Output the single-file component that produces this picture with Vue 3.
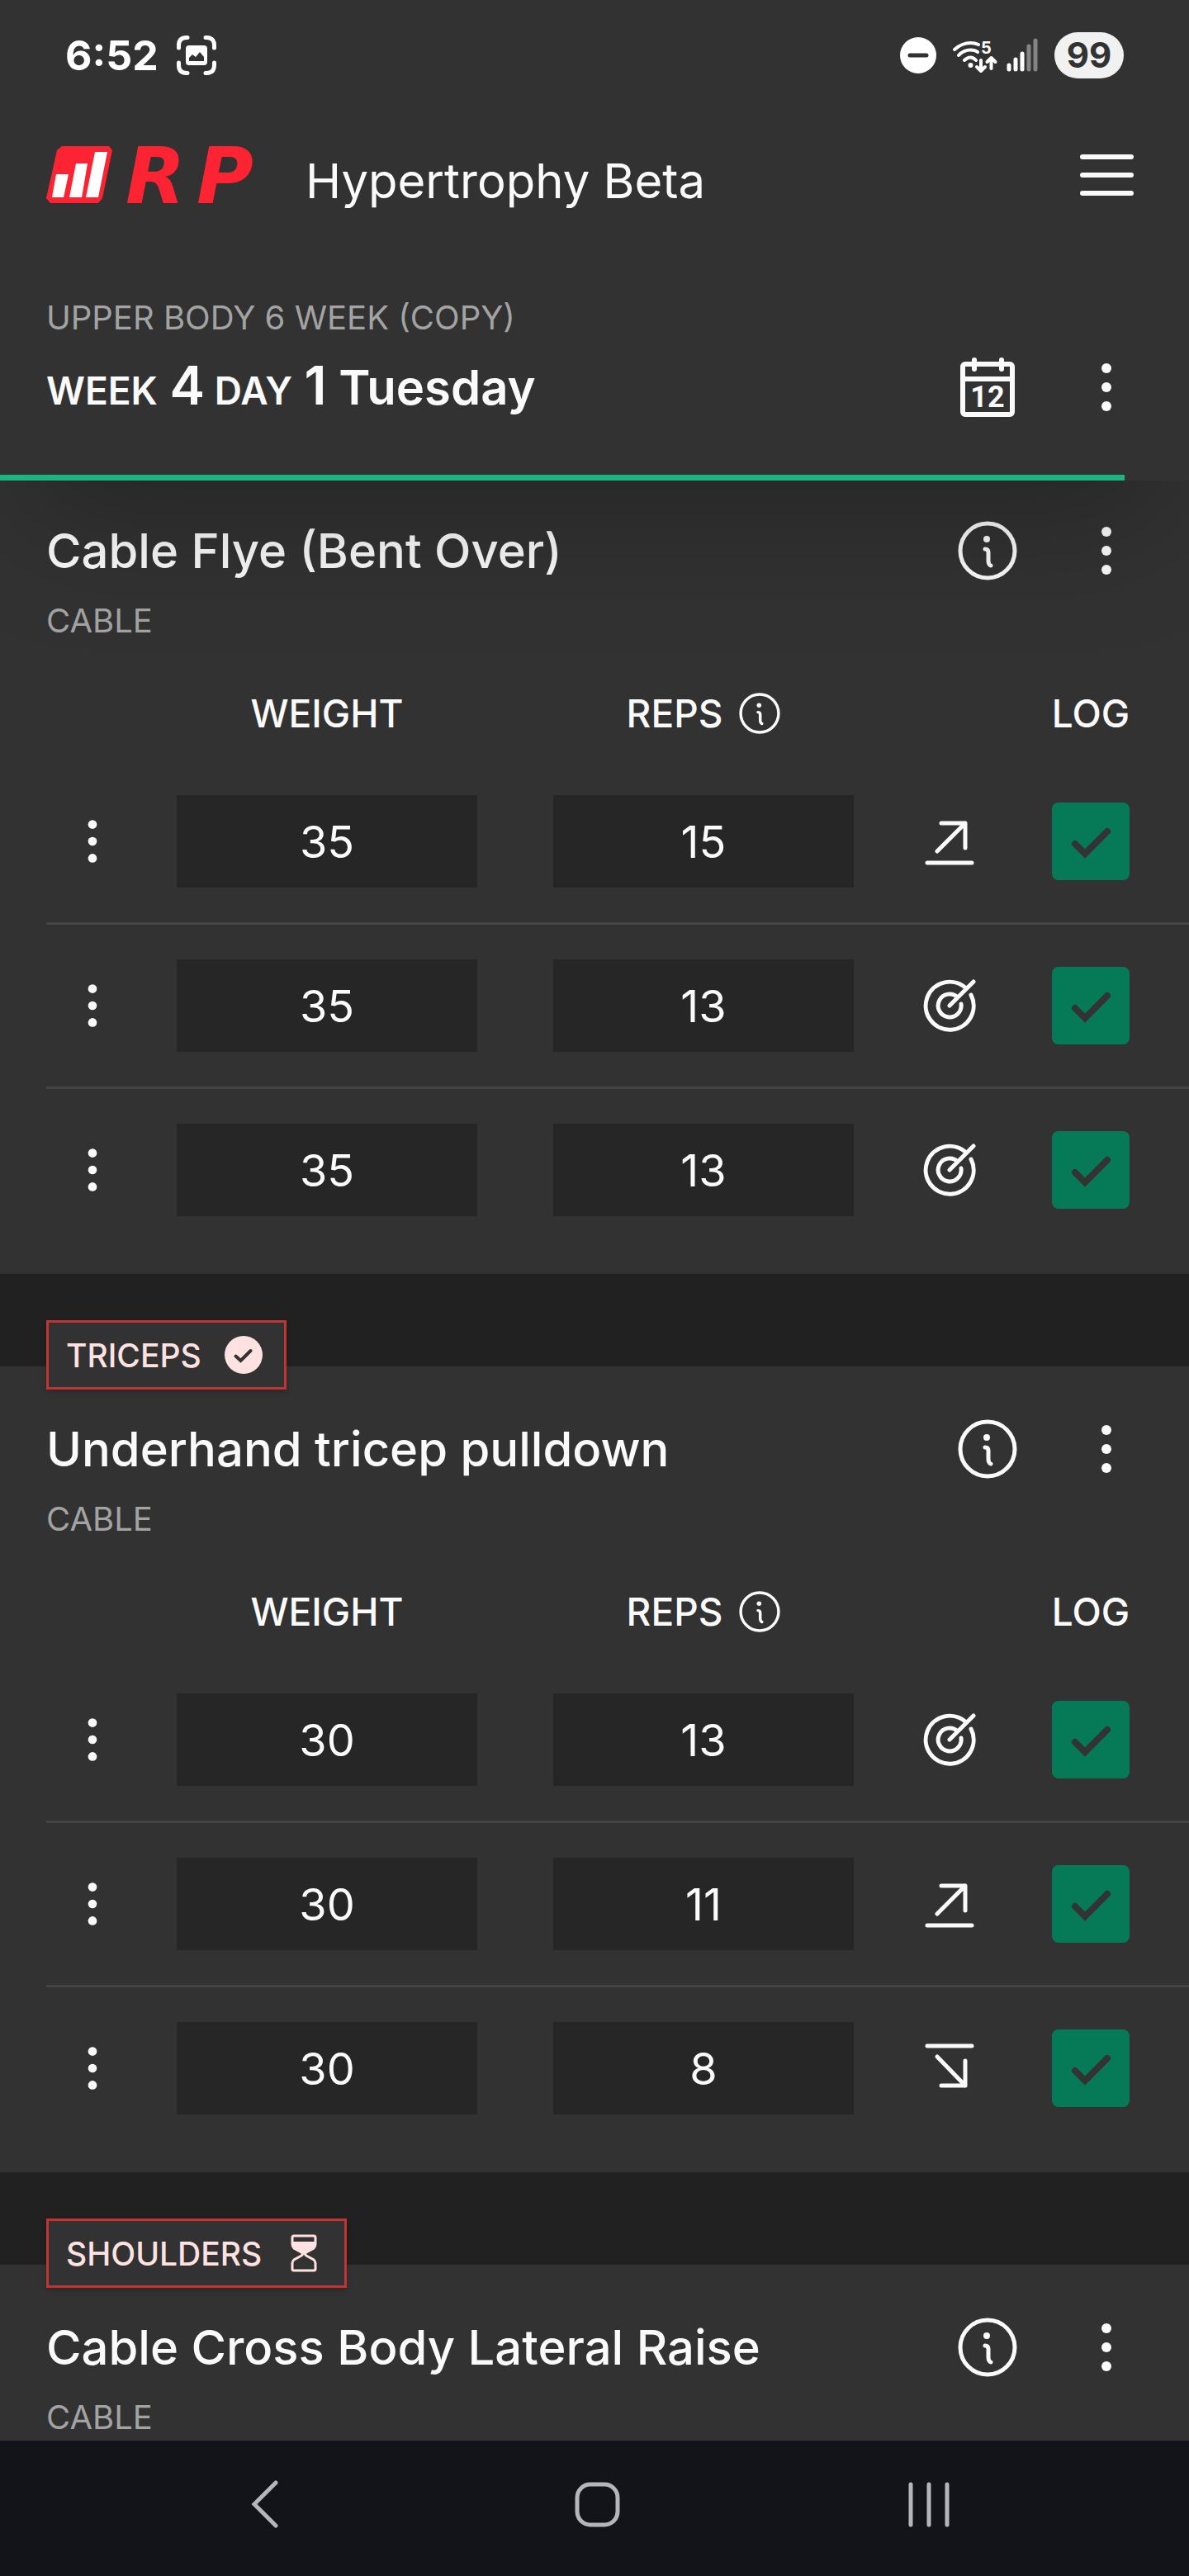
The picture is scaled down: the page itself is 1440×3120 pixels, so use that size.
<script setup>
import { ref } from 'vue';

const meso = { name: 'Upper Body 6 Week (Copy)', week: 4, day: 1, weekday: 'Tuesday', progress: 94.6 };

// trend: 'up' = beat the target, 'hit' = on target, 'down' = below it
const exercises = ref([
  {
    name: 'Cable Flye (Bent Over)',
    equipment: 'Cable',
    sets: [
      { weight: 35, reps: 15, trend: 'up', done: true },
      { weight: 35, reps: 13, trend: 'hit', done: true },
      { weight: 35, reps: 13, trend: 'hit', done: true }
    ]
  },
  {
    name: 'Underhand tricep pulldown',
    equipment: 'Cable',
    muscle: 'Triceps',
    status: 'done',
    sets: [
      { weight: 30, reps: 13, trend: 'hit', done: true },
      { weight: 30, reps: 11, trend: 'up', done: true },
      { weight: 30, reps: 8, trend: 'down', done: true }
    ]
  },
  {
    name: 'Cable Cross Body Lateral Raise',
    equipment: 'Cable',
    muscle: 'Shoulders',
    status: 'pending',
    sets: []
  }
]);

const trends = {
  up: 'M22 10H51V40M51 10L17 44M5 58H59',
  hit: 'M58 19A29 29 0 1 1 52.5 11.5M46 30A14 14 0 1 1 42 22M32 32L61 3',
  down: 'M5 5H59M17 18L51 53M22 53H51V23'
};
</script>

<template>
  <div class="screen">
    <div class="top">
      <div class="status-bar">
        <span class="time">6:52</span>
        <svg class="shot" viewBox="0 0 48 48">
          <path d="M2.500 15V12Q2.500 2.500 12 2.500H13M35 2.500H36Q45.500 2.500 45.500 12V15M45.500 33V36Q45.500 45.500 36 45.500H35M13 45.500H12Q2.500 45.500 2.500 36V33" fill="none" stroke="#fff" stroke-width="5" stroke-linecap="round" />
          <rect x="11" y="12" width="26" height="24" rx="4" fill="#fff" />
          <path d="M15 31V27L19 23L23 26L28 20L33 26V31Z" fill="#323232" />
        </svg>
        <div class="status-right">
          <svg class="dnd" viewBox="0 0 44 44">
            <circle cx="22" cy="22" r="22" fill="#fff" />
            <path d="M12 22H32" stroke="#323232" stroke-width="5" stroke-linecap="round" />
          </svg>
          <svg class="network" viewBox="0 0 103 44">
            <g fill="none" stroke="#fff" stroke-width="4" stroke-linecap="round" stroke-linejoin="round">
              <path d="M2 15Q11 7 21.500 7Q27 7 31 9M7 22Q13 15.500 21.500 15.500Q27 15.500 30 18M14 28Q21.500 21 28 28" />
              <path d="M34 28V41M29 36L34 41L39 36M46.500 38V25M41.500 30L46.500 25L51.500 30" />
            </g>
            <circle cx="21.500" cy="34" r="3" fill="#fff" />
            <text x="34" y="20" class="band">5</text>
            <g stroke-width="5" stroke-linecap="round">
              <path d="M68 34V39M76 27V39M84 20V39" stroke="#fff" />
              <path d="M92 11V39M100 4V39" stroke="#848484" />
            </g>
          </svg>
          <span class="battery">99</span>
        </div>
      </div>

      <header class="app-bar">
        <svg class="logo" viewBox="56 153 270 120">
          <path d="M69 183L75 178H132L136 183L124 241L119 247H61L56 241Z" fill="#fc2332" />
          <path d="M68 212H83L77 240H63ZM92 199H106L99 240H84ZM115 185H130L119 240H104Z" fill="#fff" />
          <text x="152 238" y="247" class="logo-text">RP</text>
        </svg>
        <h1>Hypertrophy Beta</h1>
        <button class="icon-btn" aria-label="Menu">
          <svg viewBox="0 0 72 72" fill="none" stroke="#fafafa" stroke-width="6" stroke-linecap="round">
            <path d="M7 14H66M7 36H66M7 58H66" />
          </svg>
        </button>
      </header>

      <div class="meso">
        <p class="label">{{ meso.name }}</p>
        <div class="title-row">
          <h2>
            <span class="unit">Week</span> <span class="num">{{ meso.week }}</span>
            <span class="unit"> Day</span> <span class="num">{{ meso.day }}</span> {{ meso.weekday }}
          </h2>
          <button class="icon-btn" aria-label="Calendar">
            <svg viewBox="0 0 72 72" fill="none" stroke="#fafafa" stroke-width="6" stroke-linecap="round">
              <rect x="6" y="8" width="60" height="61" rx="3" />
              <path d="M6 26H66M20 3V14M53 3V14" />
              <text x="36" y="60" class="cal-day">12</text>
            </svg>
          </button>
          <button class="icon-btn" aria-label="Workout options">
            <svg viewBox="0 0 72 72" fill="#fafafa">
              <circle cx="36" cy="13" r="6" /><circle cx="36" cy="36" r="6" /><circle cx="36" cy="59" r="6" />
            </svg>
          </button>
        </div>
      </div>
      <div class="progress" :style="{ width: meso.progress + '%' }"></div>
    </div>

    <main>
      <section v-for="(ex, i) in exercises" :key="ex.name" class="exercise">
        <div v-if="ex.muscle" class="tag">
          {{ ex.muscle }}
          <svg v-if="ex.status === 'done'" viewBox="0 0 46 46">
            <circle cx="23" cy="23" r="23" fill="#fee2e2" />
            <path d="M13.500 24.500L19.500 30L31.500 18" fill="none" stroke="#323232" stroke-width="4" stroke-linecap="round" />
          </svg>
          <svg v-else viewBox="0 0 46 46">
            <path d="M11 2H35Q37 2 37 4V12Q37 15 35 17L26 22Q23 24 26 26L35 31Q37 33 37 35V42Q37 44 35 44H11Q9 44 9 42V35Q9 33 11 31L20 26Q23 24 20 22L11 17Q9 15 9 12V4Q9 2 11 2Z" fill="none" stroke="#fee2e2" stroke-width="3" />
            <path d="M9 9H37V13L34 17L23 25L12 17L9 13Z" fill="#fee2e2" />
          </svg>
        </div>

        <div class="title-row">
          <h3>{{ ex.name }}</h3>
          <button class="icon-btn" :aria-label="'About ' + ex.name">
            <svg viewBox="0 0 72 72" fill="none" stroke="#fafafa" stroke-width="5" stroke-linecap="round">
              <circle cx="36" cy="36" r="33" />
              <path d="M33 34Q37 34 37 38V48Q37 53 40 54" />
              <circle cx="35" cy="22" r="4" fill="#fafafa" stroke="none" />
            </svg>
          </button>
          <button class="icon-btn" :aria-label="'Options for ' + ex.name">
            <svg viewBox="0 0 72 72" fill="#fafafa">
              <circle cx="36" cy="13" r="6" /><circle cx="36" cy="36" r="6" /><circle cx="36" cy="59" r="6" />
            </svg>
          </button>
        </div>
        <p class="label equipment">{{ ex.equipment }}</p>

        <table v-if="ex.sets.length">
          <thead>
            <tr>
              <th class="col-menu"></th>
              <th>Weight</th>
              <th>
                <span class="reps">
                  Reps
                  <button class="info-sm" aria-label="About reps">
                    <svg viewBox="0 0 72 72" fill="none" stroke="#fafafa" stroke-width="5" stroke-linecap="round">
                      <circle cx="36" cy="36" r="33" />
                      <path d="M33 34Q37 34 37 38V48Q37 53 40 54" />
                      <circle cx="35" cy="22" r="4" fill="#fafafa" stroke="none" />
                    </svg>
                  </button>
                </span>
              </th>
              <th class="col-trend"></th>
              <th class="col-log">Log</th>
            </tr>
          </thead>
          <tbody>
            <tr v-for="(set, n) in ex.sets" :key="n">
              <td class="col-menu">
                <button class="set-btn" :aria-label="'Set ' + (n + 1) + ' options'">
                  <svg viewBox="0 0 72 72" fill="#fafafa">
                    <circle cx="36" cy="13" r="6" /><circle cx="36" cy="36" r="6" /><circle cx="36" cy="59" r="6" />
                  </svg>
                </button>
              </td>
              <td><input :id="`w${i}-${n}`" v-model="set.weight" class="value" type="text" inputmode="decimal" :aria-label="`Set ${n + 1} weight`"></td>
              <td><input :id="`r${i}-${n}`" v-model="set.reps" class="value" type="text" inputmode="numeric" :aria-label="`Set ${n + 1} reps`"></td>
              <td class="col-trend">
                <svg class="trend" viewBox="0 0 64 64" fill="none" stroke="#fafafa" stroke-width="5" stroke-linecap="round" stroke-linejoin="round">
                  <path :d="trends[set.trend]" />
                </svg>
              </td>
              <td class="col-log">
                <label class="log">
                  <input v-model="set.done" type="checkbox" :aria-label="`Log set ${n + 1}`">
                  <svg v-if="set.done" viewBox="0 0 94 94" fill="none" stroke="#333" stroke-width="8" stroke-linecap="round">
                    <path d="M28 50L40 62L67 35" />
                  </svg>
                </label>
              </td>
            </tr>
          </tbody>
        </table>
      </section>
    </main>

    <nav class="nav-bar">
      <button aria-label="Back">
        <svg viewBox="0 0 60 60"><path d="M43 4L17 30L43 56" /></svg>
      </button>
      <button aria-label="Home">
        <svg viewBox="0 0 60 60"><rect x="6" y="6" width="49" height="49" rx="16" /></svg>
      </button>
      <button aria-label="Recent apps">
        <svg viewBox="0 0 60 60"><path d="M8 6V55M30 6V55M52 6V55" /></svg>
      </button>
    </nav>
  </div>
</template>

<style>
body { margin: 0; background: #212121; }
</style>

<style scoped>
.screen { min-height: 100vh; display: flex; flex-direction: column; background: #212121; color: #fafafa; font-family: Inter, "Open Sans", sans-serif; }
h1, h2, h3, p { margin: 0; }
button { background: none; border: none; padding: 0; cursor: pointer; }
svg { display: block; }

/* Header block, casts a shadow on the list */
.top { position: relative; z-index: 2; background: #323232; box-shadow: 0 75px 150px -36px rgba(0, 0, 0, 0.25); }

.status-bar { display: flex; align-items: center; height: 134px; padding: 0 79px; }
.time { font-size: 50px; font-weight: 700; line-height: 64px; color: #fff; }
.shot { width: 48px; height: 48px; margin-left: 22px; }
.status-right { display: flex; align-items: center; gap: 20px; margin-left: auto; }
.dnd { width: 44px; height: 44px; }
.network { width: 103px; height: 44px; }
.band { fill: #fff; font-size: 20px; font-weight: 700; }
.battery { min-width: 84px; border-radius: 28px; background: #f1f1f1; color: #323232; font-size: 42px; font-weight: 700; line-height: 56px; text-align: center; }

.app-bar { display: flex; align-items: center; height: 156px; padding: 0 64px 0 56px; }
.logo { width: 270px; height: 120px; }
.logo-text { fill: #fc2332; font: italic 700 94px "DejaVu Sans", sans-serif; }
h1 { flex: 1; margin-left: 44px; padding-top: 14px; font-size: 58px; font-weight: 400; line-height: 84px; }

.meso { padding: 67px 0 64px; }
.label { padding: 0 56px; font-size: 40px; line-height: 56px; color: #a3a3a3; text-transform: uppercase; }
.title-row { display: flex; align-items: center; gap: 72px; min-height: 84px; padding: 0 64px 0 56px; }
.meso .title-row { margin-top: 14px; }
.icon-btn { flex: none; width: 72px; height: 72px; }
.cal-day { fill: #fafafa; stroke: none; font: 700 36px Roboto, sans-serif; text-anchor: middle; }
h2 { flex: 1; font-size: 58px; font-weight: 600; line-height: 84px; }
.unit { font-size: 46px; line-height: 1; text-transform: uppercase; }
.num { font-size: 64px; line-height: 1; }
.progress { height: 7px; background: #1bb584; }

main { flex: 1; display: flex; flex-direction: column; margin-top: -15px; }
.exercise { position: relative; padding: 58px 0 28px; background: #323232; }
.exercise + .exercise { margin-top: 112px; }
.exercise:last-child { flex: 1; padding-bottom: 0; }
h3 { flex: 1; font-size: 58px; font-weight: 500; line-height: 84px; }
.equipment { margin-top: 15px; }

.tag { position: absolute; top: -56px; left: 56px; display: flex; align-items: center; gap: 28px; box-sizing: border-box; height: 84px; padding: 0 26px 0 21px; border: 3px solid #c23434; background: #323232; box-shadow: 0 3px 6px rgba(0, 0, 0, 0.2); font-size: 39px; font-weight: 500; color: #fee2e2; text-transform: uppercase; }
.tag svg { width: 46px; height: 46px; }

table { width: calc(100% - 56px); margin: 27px 0 0 56px; table-layout: fixed; border-collapse: separate; border-spacing: 0; }
th { height: 114px; padding: 0; font-size: 46px; font-weight: 500; text-transform: uppercase; }
td { padding: 42px 46px; }
tbody tr + tr td { border-top: 3px solid #444; }
.col-menu { width: 112px; padding: 0; }
.col-trend { width: 140px; padding: 0; }
.col-log { width: 202px; padding: 0 18px 0 0; }
.reps { display: flex; align-items: center; justify-content: center; gap: 20px; }
.info-sm, .info-sm svg { width: 50px; height: 50px; }
.set-btn { display: block; width: 64px; height: 64px; margin: 0 auto; }
.value { display: block; box-sizing: border-box; width: 100%; height: 112px; padding: 0; border: none; background: #262626; color: #fafafa; font-family: inherit; font-size: 54px; text-align: center; }
.trend { width: 64px; height: 64px; margin: 0 auto; }
.log { display: grid; width: 94px; height: 94px; margin: 0 auto; }
.log > * { grid-area: 1 / 1; }
.log input { appearance: none; width: 94px; height: 94px; margin: 0; border-radius: 8px; background: #262626; }
.log input:checked { background: #067a57; }
.log svg { pointer-events: none; }

.nav-bar { position: relative; display: grid; grid-template-columns: repeat(3, 1fr); box-sizing: border-box; height: 164px; padding: 0 114px 10px 120px; background: #131419; }
.nav-bar svg { width: 60px; height: 60px; margin: 0 auto; fill: none; stroke: #b6b6ba; stroke-width: 5; stroke-linecap: round; }
</style>
